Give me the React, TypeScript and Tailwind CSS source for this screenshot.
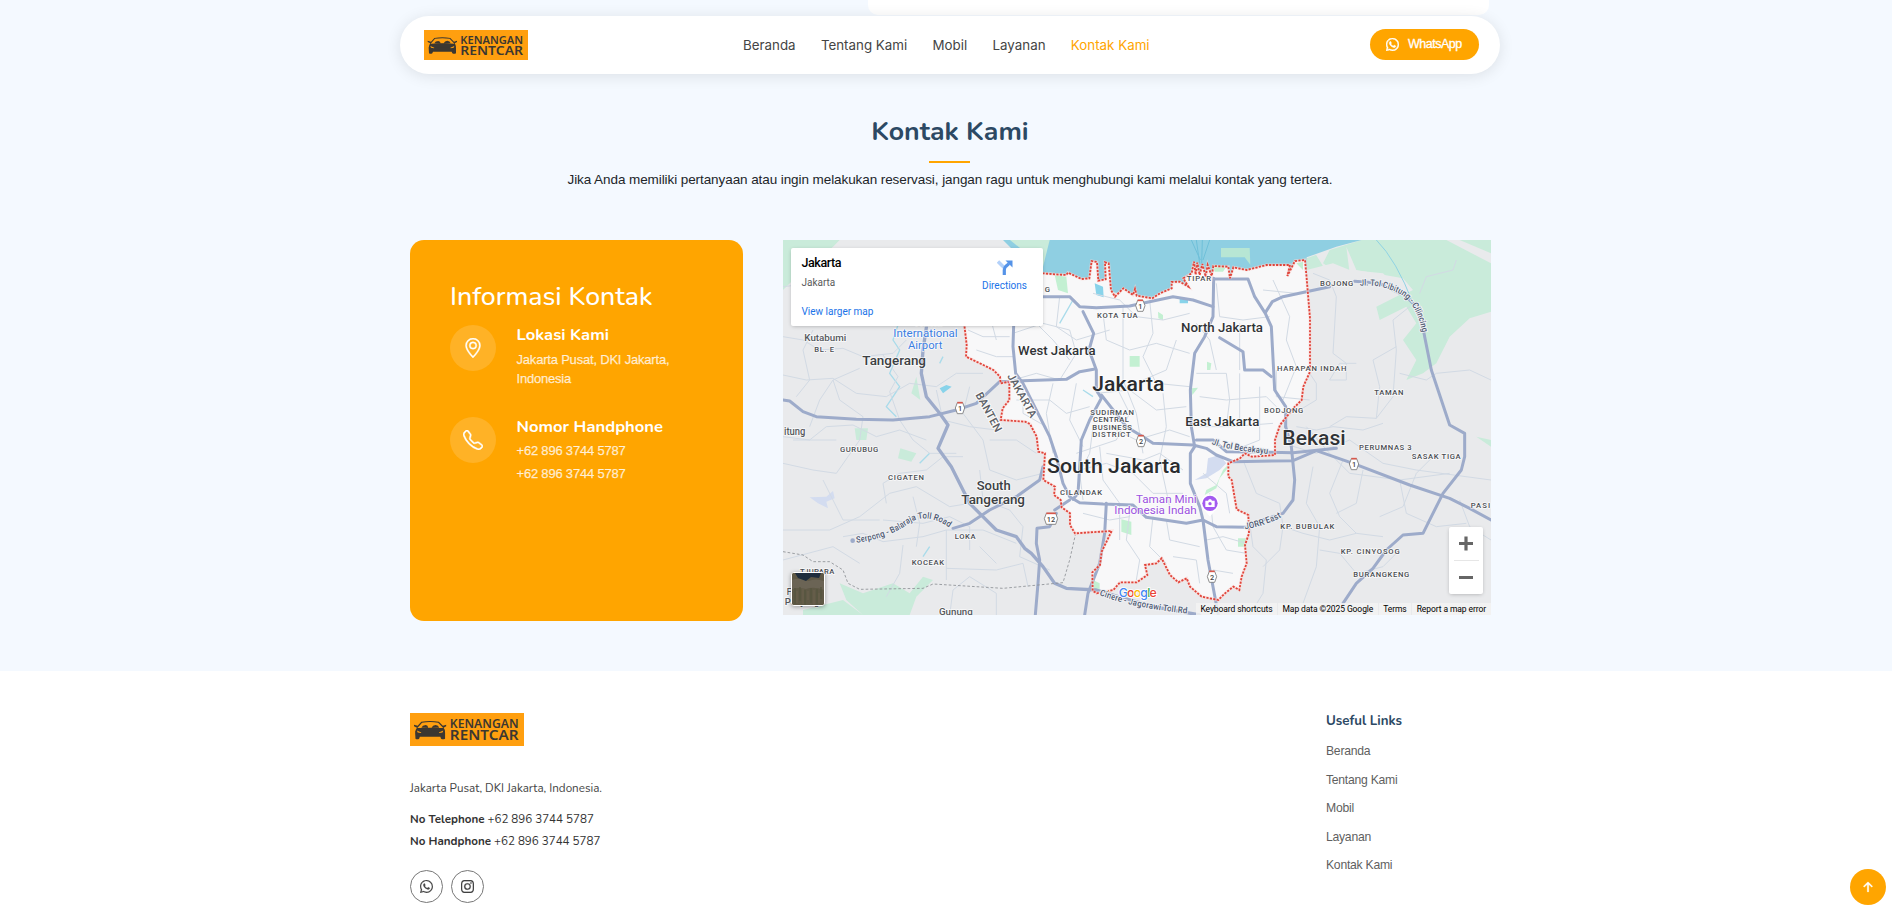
import type { ReactNode } from 'react';
import { BsArrowUpShort, BsGeoAlt, BsInstagram, BsTelephone, BsWhatsapp } from 'react-icons/bs';

const sans = "font-['Liberation_Sans',Arial,sans-serif]";
const nunito = "font-['Nunito',Lato,sans-serif]";

function Logo({ className }: { className: string }) {
  return (
    <svg viewBox="72 60 312 90" preserveAspectRatio="none" className={className} role="img" aria-label="Kenangan Rentcar">
      <rect x="72" y="60" width="312" height="90" fill="#ff9f0f" />
      <g fill="#3b3731">
        <path d="M103 84 Q127 80 151 84 L162 95 L171 92 L171 96 L164 100 Q169 106 168 114 L168 130 Q162 133 157 130 L155 125 L99 125 L97 130 Q92 133 87 130 L86 114 Q86 106 91 100 L83 96 L83 92 L93 95 Z" />
        <path d="M105 86.5 Q127 83 149 86.5 L159 97 L163 101 L92 101 L96 97 Z" fill="#ff9f0f" />
        <path d="M103 100 Q106 93 115 93 Q121 94 122 100 Z M131 100 Q134 93 142 92.5 Q150 93 152 100 Z M94 102 Q127 98 161 102 L168 112 H86 Z" />
        <path d="M91 108 L103 113 L102 114.5 L93 113 Z M163 108 L151 113 L152 114.5 L161 113 Z" fill="#ff9f0f" />
        <text x="181" y="102" fontSize="33" fontWeight="600" textLength="188" lengthAdjust="spacingAndGlyphs" fontFamily="Noto Sans, sans-serif">KENANGAN</text>
        <text x="181" y="135" fontSize="38" fontWeight="600" textLength="188" lengthAdjust="spacingAndGlyphs" fontFamily="Noto Sans, sans-serif">RENTCAR</text>
      </g>
    </svg>
  );
}

type Label = [text: string, x: number, y: number, width: number, size: number, color?: string, weight?: number];

const GREY = '#55585d';
const BLUE = '#3b7fe2';
const PURPLE = '#9b51e0';

const labelsNW: Label[] = [
  ['G', 794, 172, 13, 23],
  ['KOTA TUA', 951, 251, 122, 23],
  ['Kutabumi', 73, 321, 126, 29, GREY],
  ['BL. E', 103, 354, 59, 23],
  ['Hatta', 405, 274, 82, 33, BLUE, 400],
  ['International', 340, 308, 193, 33, BLUE, 400],
  ['Airport', 384, 343, 103, 33, BLUE, 400],
  ['Tangerang', 247, 393, 191, 38, '#3c4043'],
  ['West Jakarta', 714, 362, 233, 38, '#303336'],
  ['Jakarta', 937, 471, 216, 58, '#2a2c2f'],
  ['SUDIRMAN', 931, 541, 131, 23],
  ['CENTRAL', 939, 563, 108, 23],
];
const labelsNE: Label[] = [
  ['TIPAR', 170, 139, 73, 23],
  ['North Jakarta', 153, 292, 246, 38, '#303336'],
  ['BOJONG', 570, 154, 100, 23],
  ['HARAPAN INDAH', 441, 409, 208, 23],
  ['TAMAN', 733, 481, 87, 23],
  ['BODJONG', 402, 536, 118, 23],
];
const labelsSW: Label[] = [
  ['BUSINESS', 937, 30, 119, 23],
  ['DISTRICT', 937, 53, 115, 23],
  ['itung', 12, 45, 64, 30, GREY],
  ['GURUBUG', 180, 98, 115, 23],
  ['CIGATEN', 324, 181, 108, 23],
  ['South', 590, 212, 102, 38, '#3c4043'],
  ['Tangerang', 544, 252, 191, 38, '#3c4043'],
  ['CILANDAK', 840, 226, 126, 23],
  ['LOKA', 524, 359, 63, 23],
  ['KOCEAK', 395, 436, 97, 23],
  ['TJUPARA', 60, 463, 103, 23],
  ['Gunung', 477, 585, 101, 29, GREY],
  ['F', 20, 525, 14, 29, GREY],
  ['Panjang', 14, 555, 104, 29, GREY],
  ['South Jakarta', 801, 160, 401, 58, '#2a2c2f'],
  ['Indonesia Indah', 1003, 284, 247, 33, PURPLE, 400],
];
const labelsSE: Label[] = [
  ['Taman Mini', 18, 250, 182, 33, PURPLE, 400],
  ['East Jakarta', 166, 20, 222, 38, '#303336'],
  ['Bekasi', 457, 75, 190, 58, '#303336'],
  ['PERUMNAS 3', 687, 91, 158, 23],
  ['SASAK TIGA', 845, 118, 147, 23],
  ['PASIR', 1022, 266, 76, 23],
  ['KP. BUBULAK', 451, 328, 162, 23],
  ['KP. CINYOSOG', 632, 403, 177, 23],
  ['BURANGKENG', 670, 473, 168, 23],
];

function Labels({ items }: { items: Label[] }) {
  return (
    <>
      {items.map(([text, x, y, width, size, color, weight]) => (
        <text key={text} x={x} y={y} textLength={width} lengthAdjust={size === 23 ? 'spacing' : 'spacingAndGlyphs'} fontSize={size} fontWeight={weight ?? 500} fill={color ?? '#4a4d52'} stroke="#ffffff" strokeOpacity="0.75" strokeWidth="5" strokeLinejoin="round" paintOrder="stroke">
          {text}
        </text>
      ))}
    </>
  );
}

function Shield({ x, y, label }: { x: number; y: number; label: string }) {
  const w = label.length > 1 ? 20 : 14;
  return (
    <g transform={`translate(${x} ${y})`}>
      <path d={`M${-w + 6} -16 L${w - 6} -16 L${w} 0 L${w - 6} 17 L${-w + 6} 17 L${-w} 0 Z`} fill="#fff" stroke="#777" strokeWidth="2.5" />
      <path d={`M${-w + 6} -16 L${w - 6} -16`} stroke="#d8574b" strokeWidth="5" />
      <text x="0" y="9" fontSize="22" fontWeight="500" textAnchor="middle" fill="#444">{label}</text>
    </g>
  );
}

const border =
  'M544 60 L544 255 L551 315 L549 350 L601 375 L631 390 L651 410 L653 430 L679 425 L679 480 L659 505 L653 540 L726 545 L741 552 L761 590 L766 635 L786 640 L781 720 L816 740 L813 765 L833 780 L836 802 L861 820 L861 855 L876 880 L921 877 L986 873 L956 935 L951 975 L928 997 L929 1052 L941 1060 L991 1050 L1011 1027 L1061 1027 L1093 1005 L1086 975 L1120 970 L1136 955 L1161 1005 L1186 1027 L1211 1015 L1221 1040 L1256 1070 L1306 1080 L1326 1060 L1351 1040 L1369 1050 L1376 1010 L1391 970 L1386 915 L1398 880 L1396 825 L1361 808 L1346 720 L1336 710 L1336 670 L1371 655 L1386 640 L1406 650 L1476 645 L1476 600 L1491 555 L1531 505 L1556 480 L1561 440 L1581 395 L1581 235 L1571 115 L1566 60 L1536 63 L1513 108 L1521 75 L1451 75 L1391 90 L1351 82 L1341 115 L1336 80 L1291 78 L1286 108 L1274 75 L1268 110 L1258 72 L1250 105 L1243 68 L1238 104 L1233 65 L1226 100 L1201 115 L1216 140 L1190 125 L1166 126 L1166 145 L1131 160 L1108 175 L1061 167 L1056 147 L1050 165 L1021 145 L996 170 L984 150 L977 70 L966 67 L968 118 L946 122 L942 66 L926 63 L919 115 L896 117 L855 98 L850 105 L816 103 L781 100 Z';

const minorRoads = [
  'M0 140 L90 130 L150 160 L250 150 L300 90',
  'M0 290 L60 300 L110 330 L180 325 L240 350 L330 340 L370 300',
  'M80 560 L110 480 L150 420 L230 385 M40 470 L80 420 L60 330 L90 270',
  'M0 405 L70 420 L150 415 L220 460 L310 470 L380 430 L460 440 L520 400 L600 400',
  'M150 420 L170 480 L240 530 L230 600 L160 700 L90 690 L0 670',
  'M300 345 L345 410 L320 455 L350 540 L390 600 L440 640 L520 640',
  'M0 590 L80 600 L130 560 L210 555 L280 590 L350 570 L430 600',
  'M310 790 L300 730 L350 700 L430 690 L480 650 L540 650',
  'M300 840 L420 850 L500 830 L560 860 L560 930 M390 770 L410 850 L400 920',
  'M0 870 L140 870 L230 830 L320 760 L400 740 L500 800 L560 790',
  'M180 890 L240 880 L300 905 L420 890 L490 870 L600 870 L700 910',
  'M490 870 L490 1020 M490 985 L640 990 L720 970 L735 1040 M590 920 L640 970',
  'M500 1125 L510 1050 L560 1010 L640 1060 L640 1125 M360 915 L350 1000 L310 1070',
  'M460 450 L480 540 L560 560 L640 570 M560 440 L540 520 L600 600 L620 690 L700 720 L780 700',
  'M620 600 L700 600 L760 640 M590 690 L600 780 L680 810 L720 860 L710 950 L800 990',
  'M690 420 L760 400 L830 420 L880 340 L860 270 L780 250 L690 280',
  'M730 160 L760 250 L810 300 L860 360 M830 170 L820 260 L880 300 L980 270',
  'M555 270 L600 290 L680 290 M580 330 L640 350 L690 350 M720 430 L720 520 L790 560',
  'M700 480 L800 480 L850 520 L920 500 M810 430 L790 520 L810 640 M880 430 L860 540 L900 620',
  'M960 220 L970 300 L1040 330 L1120 310 L1220 340 M1020 200 L1020 420 L1060 520 L1080 640',
  'M930 160 L1010 180 L1060 230 L1140 240 L1220 220 M1100 180 L1110 280 L1080 350 L1120 430 L1220 440',
  'M940 460 L1040 450 L1120 510 L1210 500 M980 560 L1060 600 L1160 570 L1220 590',
  'M890 690 L970 670 L1050 700 L1110 760 L1200 760 M950 620 L960 720 L1010 790 L1010 900',
  'M930 560 L920 640 L890 700 L900 780 M970 640 L1080 660 L1130 640 L1200 690',
  'M900 820 L980 840 L1040 830 M1040 820 L1030 900 L1070 960 L1060 1020 M1110 830 L1100 920 L1150 970',
  'M1150 840 L1160 900 L1250 920 M1170 950 L1240 960 L1250 1030 M1260 700 L1330 760 L1340 820',
  'M1280 760 L1290 860 L1330 930 L1390 940 M1290 990 L1350 1000 M1270 900 L1320 890 L1390 910',
  'M1250 470 L1330 480 L1450 470 L1480 500 M1240 400 L1330 400 L1340 480 L1330 560 M1370 250 L1370 390',
  'M1250 560 L1340 560 L1470 550 M1370 400 L1370 560 M1430 440 L1430 600 L1380 620',
  'M1300 130 L1310 230 L1380 240 L1460 230 M1470 120 L1520 230 L1510 300 L1540 380 L1500 480',
  'M1240 250 L1280 300 L1300 390 M1440 150 L1540 160 M1480 390 L1480 470 L1580 480',
  'M880 640 L1000 600 L1040 520 L1000 440 M1080 420 L1150 390 L1180 300 M1140 460 L1150 560 L1130 660 L1160 800',
  'M1590 100 L1640 120 L1660 170 L1650 340 L1690 370 L1690 420 L1640 420 L1670 370 L1720 370',
  'M1550 510 L1600 480 L1600 430 L1580 400 M1640 560 L1690 530 L1780 535 L1830 470 L1840 330 L1830 240 L1880 200',
  'M1780 535 L1790 440 L1770 360 L1840 320 M1540 560 L1600 570 L1650 560 L1740 570 L1800 550',
  'M1850 400 L1930 420 L1960 400 L2060 390 L2124 420 M2020 60 L2010 90 L1930 110 L1910 160',
  'M1500 610 L1600 640 L1700 600 L1800 670 L1900 690 L2124 720 M1570 560 L1640 640 L1700 700 L1850 720 L2000 700',
  'M1380 660 L1420 760 L1490 790 L1500 860 L1560 880 L1640 900 L1720 880 L1800 890',
  'M1400 850 L1410 920 L1450 960 L1440 1060 L1400 1125 M1500 860 L1490 930 L1440 980',
  'M1590 680 L1570 790 L1610 860 L1600 980 L1560 1090 M1680 660 L1640 760 L1670 830 L1720 880',
  'M1610 930 L1670 940 L1720 1000 L1800 980 L1850 930 M1850 720 L1870 820 L1960 860 L2050 850',
  'M1740 690 L1720 790 L1660 820 M2030 780 L2060 860 L2124 900 M1960 640 L1900 700 L1860 800 L1790 830',
  'M30 600 L160 600 M120 720 L180 840 L290 840 M0 960 L150 920 L230 970 M600 150 L640 300',
];

function JakartaMap() {
  return (
    <svg viewBox="0 0 2124 1125" className="block h-full w-full" fontFamily="Roboto, sans-serif" fill="none">
      <rect width="2124" height="1125" fill="#e9eaec" />
      <g fill="#c9ebda">
        <path d="M0 0 H170 L150 20 L40 110 L0 150 Z" />
        <path d="M1571 55 L1640 30 L1736 0 H2124 V215 L2060 235 L2000 290 L1960 370 L1920 400 L1870 420 L1900 360 L1860 300 L1900 250 L1870 200 L1790 240 L1780 200 L1860 160 L1800 100 L1700 90 L1650 70 L1571 90 Z" />
        <path d="M170 1030 L240 1060 L330 1030 L380 1060 L420 1010 L450 1020 L400 1070 L380 1125 L240 1125 L190 1080 Z M60 1110 L180 1080 L240 1125 L60 1125 Z" />
        <path d="M400 410 L412 480 L385 460 Z M352 625 L400 640 L385 665 L345 655 Z M215 565 L255 565 L250 600 L220 600 Z M2080 590 L2124 600 V620 Z" />
      </g>
      <path d="M1590 30 L1650 10 L1620 70 L1660 95 L1640 110 Z M1690 20 L1720 90 L1860 115 L1890 150 L1870 160 L1700 100 Z M1990 0 L2124 70 L2124 40 L2030 0 Z" fill="#e9eaec" />
      <path d="M660 0 L780 120 L1180 190 L1571 130 L1571 52 L1660 20 L1736 0 Z" fill="#8fcfe2" />
      <path d="M681 0 L780 80 L800 0 Z" fill="#c9ebda" />
      <path d="M1314 24 H1400 L1402 74 L1385 52 H1314 Z" fill="#b7e6d4" />
      <path d="M1780 0 Q1840 60 1890 190" stroke="#8fd3e4" strokeWidth="3" />
      <path d="M1240 0 L1250 70 M1258 0 L1256 70 M1280 0 L1260 60 M1225 0 L1252 60" stroke="#6fc0d9" strokeWidth="3" />
      <path d={border} fill="#f8f8f9" />
      <g fill="#c3f0d2">
        <path d="M815 105 L850 110 L855 160 L825 150 Z M1040 348 H1070 V380 H1040 Z M1125 215 L1140 225 L1140 240 L1126 235 Z M1272 365 L1285 370 L1282 390 L1272 390 Z M1225 445 L1245 443 L1228 465 Z" />
        <path d="M1340 670 L1330 690 L1310 715 L1300 745 L1265 765 L1270 750 L1300 735 L1320 690 Z M1015 838 L1045 845 L1045 885 L1015 875 Z M1365 895 H1390 V920 H1365 Z M1290 75 L1330 80 L1320 95 L1295 95 Z M1540 70 L1560 65 L1560 90 Z M930 1020 L950 1030 L950 1050 L930 1050 Z" />
      </g>
      <path d="M1235 720 L1270 700 L1275 655 L1310 645 L1330 670 L1310 690 L1270 715 Z M80 772 L130 770 L150 753 L155 775 L130 785 L135 805 L105 790 Z" fill="#d3dcf0" />
      <g fill="#88d3ea">
        <path d="M935 130 L960 140 L962 172 L940 165 Z M470 445 L490 435 L506 440 L480 460 Z M1190 175 H1215 V190 H1190 Z" />
      </g>
      <path d="M350 240 L330 300 L350 330 L320 400 L350 440 L310 500 L340 530 M550 50 L560 40 M900 450 L930 470 M410 670 L440 640 M440 920 L420 950 M830 250 L870 180 M480 350 L470 370" stroke="#a9dbea" strokeWidth="4" />
      <g stroke="#d2dae4" strokeWidth="3" strokeLinejoin="round">
        {minorRoads.map((d) => (
          <path key={d} d={d} />
        ))}
      </g>

      <g stroke="#9dabca" strokeWidth="9" strokeLinejoin="round" strokeLinecap="round">
        <path d="M0 480 L20 483 L60 515 L100 530 L220 538 L330 540 L440 530 L520 510 L580 490 L650 425 L850 418 L890 395 L932 388" />
        <path d="M432 250 L420 330 L415 400 L430 470 L470 520 L495 555 L465 625 L505 680 L560 790 L590 820 L640 870 L700 890 L725 925 L745 940 L780 980 L815 1030 L850 1045 L940 1050 L1000 1068 L1110 1100 L1250 1125" strokeWidth="10" />
        <path d="M510 865 L560 850 L620 810 L700 770 L770 720 L780 680" />
        <path d="M781 170 L860 170 L890 200 L940 203 L1040 198 L1170 170 L1230 180 L1290 200" />
        <path d="M692 255 L690 320 L698 400 L720 430 L770 530 L800 590 L820 650 L840 730 L860 770 L890 788 L960 792 L1050 795 L1090 832 L1210 850 L1260 840 L1300 860 L1390 862 L1440 840 L1500 820 L1530 780 L1535 720 L1525 620 L1508 560" />
        <path d="M900 215 L932 280 L918 330 L940 390 L940 450 L955 475 L920 540 L895 600 L890 680 L885 760 L870 778" />
        <path d="M955 465 L1030 560 L1080 590 L1110 610 L1230 615 L1270 625 L1300 645 L1350 665 L1530 662 L1600 632 L1710 670 L1880 735 L2000 775 L2060 805 L2124 840" />
        <path d="M1292 115 L1290 230 L1265 290 L1235 340 L1222 450 L1225 560 L1235 620 L1222 640 L1222 730 L1250 800 L1260 840 L1275 960 L1290 1040 L1306 1125" />
        <path d="M1295 117 L1395 117 L1415 170 L1447 220 L1465 260 L1475 450 L1508 500 L1508 560" />
        <path d="M1447 218 L1468 185 L1500 170 L1570 155 L1640 140 M1310 293 L1380 335 L1385 390 L1440 390 L1465 410" />
        <path d="M1715 124 L1790 130 L1870 170 L1910 210 L1925 290 L1945 390 L2000 555 L2045 580 L2045 650 L2035 690 L1980 760 L1945 830 L1920 880 L1860 885 L1810 930 L1770 985 L1720 1030 L1680 1090" />
        <path d="M820 820 L800 860 L762 865 L760 910 L770 960 L765 1030 L757 1125 M970 790 L965 880 L950 970 L915 1060 L905 1125" />
        <path d="M1240 600 L1290 600 L1330 635 L1530 638 L1660 625 M860 780 L815 810" />
      </g>

      <path d={border} stroke="#fbd9d6" strokeWidth="9" opacity="0.6" />
      <path d={border} stroke="#e0443a" strokeWidth="5.5" strokeDasharray="6.5 4" />
      <path d="M0 935 L60 945 L90 965 L140 965 L180 990 L195 1030 L230 1048 L420 1045 L450 1032 L660 1045 L840 1028 L860 960 L877 885" stroke="#8c8f94" strokeWidth="2.5" strokeDasharray="8 6" />

      <g stroke="#fff" strokeOpacity="0.8" strokeWidth="6" paintOrder="stroke" fontWeight="500" fill="#5c6066">
        <text transform="translate(672 408) rotate(61)" textLength="146" fontSize="33">JAKARTA</text>
        <text transform="translate(577 464) rotate(62)" textLength="130" fontSize="33">BANTEN</text>
      </g>
      <path id="cibitung" d="M1731 137 Q1800 132 1856 165 Q1905 195 1920 290" />
      <path id="serpong" d="M220 908 Q310 897 370 855 Q430 810 506 868" />
      <path id="becakayu" d="M1286 612 Q1340 632 1462 642" />
      <path id="jorr" d="M1386 868 Q1440 860 1498 830" />
      <path id="cinere" d="M949 1065 Q1050 1105 1225 1122" />
      <g stroke="#eef0f4" strokeWidth="6" paintOrder="stroke" fontSize="26" fill="#4d5870" fontWeight="500">
        <text><textPath href="#cibitung" textLength="262" lengthAdjust="spacingAndGlyphs">Jl. Tol Cibitung - Cilincing</textPath></text>
        <text><textPath href="#serpong" textLength="300" lengthAdjust="spacingAndGlyphs">Serpong - Balaraja Toll Road</textPath></text>
        <text><textPath href="#becakayu" textLength="172" lengthAdjust="spacingAndGlyphs">Jl. Tol Becakayu</textPath></text>
        <text><textPath href="#jorr" textLength="116" lengthAdjust="spacingAndGlyphs">JORR East</textPath></text>
        <text><textPath href="#cinere" textLength="270" lengthAdjust="spacingAndGlyphs">Cinere - Jagorawi Toll Rd</textPath></text>
      </g>
      <circle cx="209" cy="902" r="7" fill="#9dabca" />

      <Shield x={531} y={504} label="1" />
      <Shield x={1072} y={197} label="1" />
      <Shield x={804} y={836} label="12" />
      <Shield x={1074} y={603} label="2" />
      <Shield x={1713} y={672} label="1" />
      <Shield x={1287} y={1010} label="2" />

      <g transform="translate(-9 -17)"><Labels items={labelsNW} /></g>
      <g transform="translate(1041 -17)"><Labels items={labelsNE} /></g>
      <g transform="translate(-9 539)"><Labels items={labelsSW} /></g>
      <g transform="translate(1041 539)"><Labels items={labelsSE} /></g>

      <path d="M1263 808 L1281 830 L1299 808 Z" fill="#fff" />
      <circle cx="1281" cy="790" r="27" fill="#fff" />
      <circle cx="1281" cy="790" r="23" fill="#a35bf0" />
      <path d="M1267 782 H1275 L1278 778 H1284 L1287 782 H1295 V801 H1267 Z" fill="#fff" />
      <circle cx="1281" cy="791" r="5" fill="#a35bf0" />

      <text x="1007" y="1071" fontSize="37" fontWeight="500" textLength="114" fontFamily="Inter, sans-serif" stroke="#fff" strokeWidth="5" paintOrder="stroke">
        <tspan fill="#4285f4">G</tspan><tspan fill="#ea4335">o</tspan><tspan fill="#fbbc04">o</tspan><tspan fill="#4285f4">g</tspan><tspan fill="#34a853">l</tspan><tspan fill="#ea4335">e</tspan>
      </text>
    </svg>
  );
}

function MapPanel() {
  return (
    <div className="relative h-[375px] w-[708px] overflow-hidden font-[Roboto,sans-serif]">
      <JakartaMap />
      <div className="absolute left-2 top-2 flex h-[78px] w-[252px] justify-between rounded-[2px] bg-white pl-[10.5px] pr-4 shadow-[0_1px_4px_-1px_rgba(0,0,0,0.3)]">
        <div className="flex flex-col items-start">
          <span className="mt-[7px] text-[12.5px] leading-4 font-medium tracking-[-0.42px] text-black">Jakarta</span>
          <span className="mt-[5px] text-[10px] leading-[14px] text-[#5b5b5b]">Jakarta</span>
          <span className="mt-[15px] text-[10px] leading-[14px] text-[#1a73e8]">View larger map</span>
        </div>
        <div className="flex flex-col items-center pt-3">
          <svg viewBox="0 0 16 16" className="h-4 w-4" fill="none">
            <path d="M1 1.5 L7 7.5" stroke="#b3d1fa" strokeWidth="3.4" />
            <path d="M7.3 15 V10 Q7.3 7.8 9 6.2 L12 3.6" stroke="#5593e8" strokeWidth="3.2" />
            <path d="M8.5 0.5 H15.5 V7.5 Z" fill="#5593e8" />
          </svg>
          <span className="mt-[3px] text-[10px] leading-[14px] text-[#1a73e8]">Directions</span>
        </div>
      </div>

      <div className="absolute left-2 top-[332px] h-[34px] w-[34px] overflow-hidden rounded-[3px] border border-white bg-[#655c48] shadow-[0_1px_4px_rgba(0,0,0,0.35)]">
        <svg viewBox="0 0 32 32" className="block h-full w-full">
          <rect width="32" height="32" fill="#5f5946" />
          <path d="M0 7 Q8 4 16 8 Q24 5 32 8 V17 Q22 13 14 16 Q6 14 0 16 Z" fill="#6b6455" />
          <path d="M3 0 H29 L27 5 L19 4 L14 8 L6 5 Z" fill="#1f2d3d" />
          <path d="M3 15 V31 M8 14 V28 M13 17 V32 M19 15 V30 M25 16 V32 M29 14 V26" stroke="#55553f" strokeWidth="1.3" />
          <path d="M5 18 V30 M11 16 V31 M16 18 V27 M22 17 V32 M27 20 V30" stroke="#6c624c" strokeWidth="1" />
        </svg>
      </div>

      <div className="absolute left-[666px] top-[287px] flex h-[67px] w-[34px] flex-col items-center rounded-[2px] bg-white shadow-[0_1px_4px_-1px_rgba(0,0,0,0.3)]">
        <svg viewBox="0 0 34 67" className="h-[67px] w-[34px]" stroke="#666" strokeWidth="3.2">
          <path d="M10 16.5 H24 M17 9.5 V23.5 M10 50.5 H24" />
          <path d="M5 33.5 H30" stroke="#e6e6e6" strokeWidth="1" />
        </svg>
      </div>

      <div className="absolute bottom-0 right-0 flex h-3 items-center gap-px text-[8.5px] leading-3 tracking-[-0.09px] text-black">
        <span className="bg-[#f3f3f3]/85 px-[4.5px]">Keyboard shortcuts</span>
        <span className="bg-[#f3f3f3]/85 px-[4.5px]">Map data ©2025 Google</span>
        <span className="bg-[#f3f3f3]/85 px-[4.5px]">Terms</span>
        <span className="bg-[#f3f3f3]/85 pl-[4.5px] pr-[5px]">Report a map error</span>
      </div>
    </div>
  );
}

function InfoRow({ icon, title, children }: { icon: ReactNode; title: string; children: ReactNode }) {
  return (
    <div className="flex">
      <div className="flex h-[46px] w-[46px] shrink-0 items-center justify-center rounded-full bg-white/15 text-white">{icon}</div>
      <div className="flex flex-col items-start pl-[20.5px]">
        <h4 className={`${nunito} text-[16.6px] leading-[20px] font-bold text-white`}>{title}</h4>
        {children}
      </div>
    </div>
  );
}

const infoText = "font-['Liberation_Sans',Arial,sans-serif] text-[13px] tracking-[-0.2px] text-white/75 [-webkit-text-stroke:0.25px_currentColor]";

export default function App() {
  return (
    <div className={`relative h-[915px] overflow-hidden bg-[#f4f9ff] ${sans}`}>
      <div className="flex w-[1900px] flex-col">
        <div className="flex h-[15px] pl-[868px]"><div className="h-[15px] w-[621px] rounded-b-[10px] bg-white" /></div>
        <section className="flex h-[656px] flex-col items-center">
          <h2 className={`${nunito} mt-[99px] text-[26.7px] leading-[34px] font-bold text-[#2c4964]`}>Kontak Kami</h2>
          <div className="mt-[13px] mr-px h-[2px] w-[41px] bg-[#ffa500]" />
          <p className="mt-[7px] text-[13.5px] leading-5 tracking-[-0.082px] text-[#212529]">
            Jika Anda memiliki pertanyaan atau ingin melakukan reservasi, jangan ragu untuk menghubungi kami melalui kontak yang tertera.
          </p>
          <div className="mt-[50px] ml-[410px] flex w-[1081px] items-start justify-between self-start">
            <div className="h-[381px] w-[333px] rounded-[14px] bg-[#ffa500] pl-10 pt-10">
              <h3 className={`${nunito} text-[26.6px] leading-[33px] font-medium text-white`}>Informasi Kontak</h3>
              <div className="mt-[12px] flex flex-col gap-[29px]">
                <InfoRow icon={<BsGeoAlt size={20} stroke="currentColor" strokeWidth={0.35} />} title="Lokasi Kami">
                  <span className={`${infoText} mt-[5px] leading-[19px]`}>Jakarta Pusat, DKI Jakarta,</span>
                  <span className={`${infoText} leading-[19px]`}>Indonesia</span>
                </InfoRow>
                <InfoRow icon={<BsTelephone size={20} stroke="currentColor" strokeWidth={0.35} />} title="Nomor Handphone">
                  <span className={`${infoText} mt-[2px] leading-[23px]`}>+62 896 3744 5787</span>
                  <span className={`${infoText} leading-[23px]`}>+62 896 3744 5787</span>
                </InfoRow>
              </div>
            </div>
            <MapPanel />
          </div>
        </section>
        <footer className="flex h-[244px] bg-white pl-[410px]">
          <div className="flex w-[916px] flex-col items-start">
            <Logo className="mt-[42px] h-[33px] w-[114px]" />
            <p className={`${nunito} mt-[32px] text-[11.65px] leading-5 text-[#444]`}>Jakarta Pusat, DKI Jakarta, Indonesia.</p>
            <p className={`${nunito} mt-[10px] text-[11.6px] leading-[22px] text-[#333]`}><strong className="font-bold">No Telephone</strong> +62 896 3744 5787</p>
            <p className={`${nunito} text-[11.6px] leading-[22px] text-[#333]`}><strong className="font-bold">No Handphone</strong> +62 896 3744 5787</p>
            <div className="mt-[18px] flex gap-2 text-[#444]">
              <span className="flex h-[33px] w-[33px] items-center justify-center rounded-full border border-[#777] pb-px"><BsWhatsapp size={13} stroke="currentColor" strokeWidth={0.2} /></span>
              <span className="flex h-[33px] w-[33px] items-center justify-center rounded-full border border-[#777] pb-px"><BsInstagram size={13} stroke="currentColor" strokeWidth={0.2} /></span>
            </div>
          </div>
          <div className="flex flex-col items-start pt-[40px]">
            <h4 className={`${nunito} text-[13.3px] leading-5 font-bold text-[#2c4964]`}>Useful Links</h4>
            <ul className="mt-[6px] flex flex-col items-start text-[12.2px] leading-[28.5px] tracking-[-0.26px] text-[#5f5f5f]">
              <li>Beranda</li>
              <li>Tentang Kami</li>
              <li>Mobil</li>
              <li>Layanan</li>
              <li>Kontak Kami</li>
            </ul>
          </div>
        </footer>
      </div>

      <header className="absolute left-[400px] top-4 flex h-[58px] w-[1100px] items-center rounded-full bg-white pl-6 pr-[21px] shadow-[0_2px_15px_rgba(0,0,0,0.1)]">
        <Logo className="h-[30px] w-[104px]" />
        <nav className="ml-[215px] flex gap-[25.3px] font-[Inter,sans-serif] text-[13.35px] text-[#444]">
          <span>Beranda</span>
          <span>Tentang Kami</span>
          <span>Mobil</span>
          <span>Layanan</span>
          <span className="text-[#ffa500]">Kontak Kami</span>
        </nav>
        <div className="mb-px ml-auto flex h-[31px] w-[109px] items-center gap-[9px] rounded-full bg-[#ffa500] pl-4 text-[12.5px] tracking-[-0.5px] text-white"><BsWhatsapp size={13} stroke="currentColor" strokeWidth={0.6} /><span className="[-webkit-text-stroke:0.3px_currentColor]">WhatsApp</span></div>
      </header>

      <div className="absolute left-[1850px] top-[869px] flex h-9 w-9 items-center justify-center rounded-full bg-[#ffa500] text-white"><BsArrowUpShort size={20} stroke="currentColor" strokeWidth={0.4} /></div>
    </div>
  );
}
